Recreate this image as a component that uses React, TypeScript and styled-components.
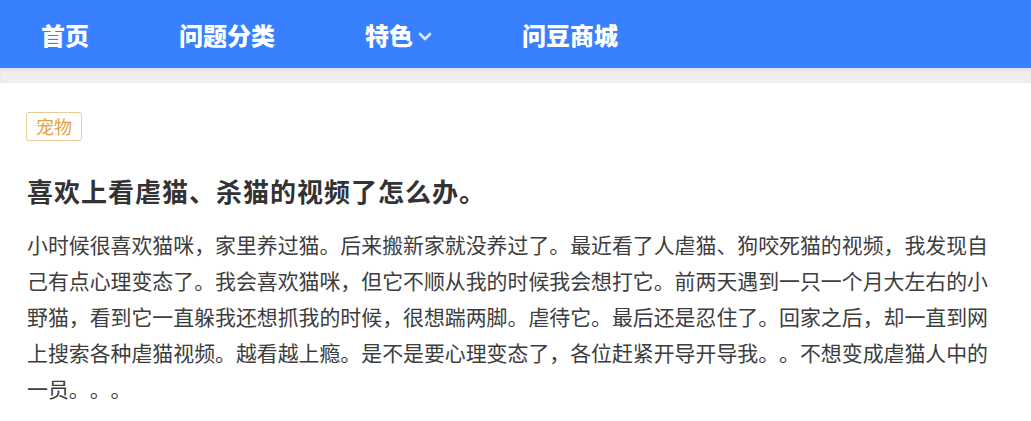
import React from "react";
import styled, { createGlobalStyle } from "styled-components";

const GlobalStyle = createGlobalStyle`
  html, body {
    margin: 0;
    padding: 0;
    background: #ffffff;
    font-family: "Noto Sans CJK SC", "Noto Sans", sans-serif;
    text-spacing-trim: space-all;
    font-kerning: none;
  }
`;

interface NavItem {
  label: string;
  dropdown?: boolean;
}

const navItems: NavItem[] = [
  { label: "首页" },
  { label: "问题分类" },
  { label: "特色", dropdown: true },
  { label: "问豆商城" },
];

const body =
  "小时候很喜欢猫咪，家里养过猫。后来搬新家就没养过了。最近看了人虐猫、狗咬死猫的视频，我发现自己有点心理变态了。我会喜欢猫咪，但它不顺从我的时候我会想打它。前两天遇到一只一个月大左右的小野猫，看到它一直躲我还想抓我的时候，很想踹两脚。虐待它。最后还是忍住了。回家之后，却一直到网上搜索各种虐猫视频。越看越上瘾。是不是要心理变态了，各位赶紧开导开导我。。不想变成虐猫人中的一员。。。";

const App: React.FC = () => {
  return (
    <>
      <GlobalStyle />
      <Header>
        <Nav>
          {navItems.map((item) => (
            <NavLink key={item.label}>
              {item.label}
              {item.dropdown && (
                <Chevron viewBox="0 0 14 9" aria-hidden>
                  <path d="M2 2 L7 7 L12 2" />
                </Chevron>
              )}
            </NavLink>
          ))}
        </Nav>
      </Header>
      <Divider />
      <Main>
        <Tag>宠物</Tag>
        <Title>喜欢上看虐猫、杀猫的视频了怎么办。</Title>
        <Content>{body}</Content>
      </Main>
    </>
  );
};

export default App;

const Header = styled.header`
  height: 68px;
  background: #3880fd;
  display: flex;
  align-items: center;
`;

const Nav = styled.nav`
  display: flex;
  align-items: center;
  gap: 90px;
  padding-left: 41px;
`;

const NavLink = styled.a`
  display: flex;
  align-items: center;
  color: #ffffff;
  font-size: 24px;
  font-weight: 900;
  line-height: 1;
  cursor: pointer;
  margin-top: 2px;
`;

const Chevron = styled.svg`
  width: 14px;
  height: 9px;
  margin-left: 5px;
  margin-top: 2px;
  fill: none;
  stroke: #d9e6ff;
  stroke-width: 2.6;
  stroke-linecap: round;
  stroke-linejoin: round;
`;

const Divider = styled.div`
  height: 15px;
  background: #efefef;
  box-shadow: inset 0 3px 3px rgba(0, 0, 0, 0.05);
`;

const Main = styled.main`
  padding: 29px 26px 0 27px;
`;

const Tag = styled.span`
  display: inline-block;
  box-sizing: border-box;
  height: 29px;
  padding: 0 9px;
  border: 1px solid #e9cd92;
  border-radius: 3px;
  color: #e3a23e;
  font-size: 18px;
  line-height: 27px;
  margin-left: -1px;
`;

const Title = styled.h1`
  margin: 32px 0 0;
  color: #333333;
  font-size: 26px;
  letter-spacing: 1px;
  font-weight: 700;
  line-height: 36px;
`;

const Content = styled.p`
  margin: 17px 0 0;
  color: #3d3d3d;
  font-size: 20.9px;
  line-height: 36px;
`;
